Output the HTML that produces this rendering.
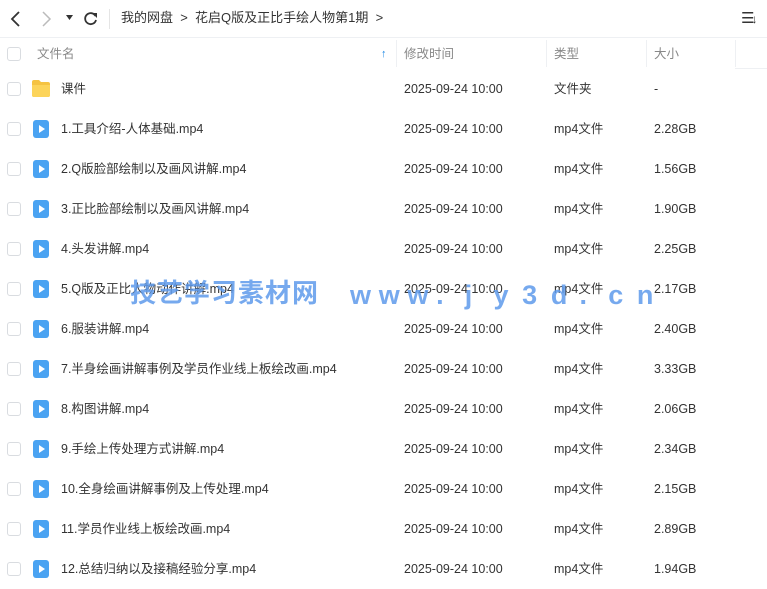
<!DOCTYPE html>
<html><head><meta charset="utf-8"><style>
*{margin:0;padding:0;box-sizing:border-box}
body{width:767px;height:587px;overflow:hidden;background:#fff;font-family:"Liberation Sans","Noto Sans CJK SC",sans-serif;font-size:12.5px;color:#333;position:relative}
.top{position:absolute;left:0;top:0;width:767px;height:38px;border-bottom:1px solid #eef0f3}
.t{position:absolute;white-space:nowrap;line-height:16px;height:16px}
.hdr{position:absolute;top:38px;left:0;width:767px;height:32px;color:#888}
.sep{position:absolute;top:40px;width:1px;height:27px;background:#eef0f3}
.cb{position:absolute;left:7px;width:14px;height:14px;border:1px solid #d9dce0;border-radius:3px;background:#fff}
.row{position:absolute;left:0;width:767px;height:40px}
.row .t{top:12px}
.vid{position:absolute;left:33px;top:11px;width:16px;height:18px;background:#4aa3f2;border-radius:3px}
.vid:after{content:"";position:absolute;left:6px;top:5px;border-left:6px solid #fff;border-top:4px solid transparent;border-bottom:4px solid transparent}
.wm{position:absolute;color:#5f9bec;opacity:.85;font-weight:bold;font-size:26px;white-space:nowrap;font-family:"Noto Sans CJK SC","WenQuanYi Zen Hei",sans-serif;line-height:32px}
.wl span{display:inline-block;width:28.7px;font-family:"Liberation Sans",sans-serif;font-size:27px}
</style></head><body>
<div class="top">
<svg style="position:absolute;left:8px;top:10px" width="16" height="18"><path d="M11 2 L4 9 L11 16" fill="none" stroke="#333" stroke-width="1.8"/></svg>
<svg style="position:absolute;left:38px;top:10px" width="16" height="18"><path d="M5 2 L12 9 L5 16" fill="none" stroke="#bbb" stroke-width="1.5"/></svg>
<svg style="position:absolute;left:66px;top:15px" width="8" height="6"><path d="M0 0 L7 0 L3.5 5Z" fill="#333"/></svg>
<svg style="position:absolute;left:83px;top:10px" width="16" height="17"><path d="M12.5 6 A5.5 5.5 0 1 0 13 10" fill="none" stroke="#333" stroke-width="1.8"/><path d="M9 3 L14 3 L14 8Z" fill="#333"/></svg>
<div style="position:absolute;left:109px;top:9px;width:1px;height:20px;background:#e5e5e5"></div>
<div class="t" style="left:121px;top:10px;font-size:13px;color:#333">我的网盘 &nbsp;&gt;&nbsp; 花启Q版及正比手绘人物第1期 &nbsp;&gt;</div>
<div class="t" style="left:741px;top:11px;font-size:15px;color:#333">☰<span style="font-size:12px;position:relative;left:-3px">↓</span></div>
</div>
<div class="hdr">
<div class="cb" style="top:9px"></div>
<div class="t" style="left:37px;top:8px">文件名</div>
<div class="t" style="left:381px;top:8px;color:#1e88e5;font-size:11px;font-weight:bold">↑</div>
<div class="t" style="left:404px;top:8px">修改时间</div>
<div class="t" style="left:554px;top:8px">类型</div>
<div class="t" style="left:654px;top:8px">大小</div>
</div>
<div class="sep" style="left:396px"></div><div class="sep" style="left:546px"></div><div class="sep" style="left:646px"></div><div class="sep" style="left:735px"></div>
<div style="position:absolute;left:735px;top:68px;width:32px;height:1px;background:#eef0f3"></div>

<div class="row" style="top:69px"><div class="cb" style="top:13px"></div>
<svg style="position:absolute;left:31px;top:10px" width="20" height="19"><path d="M1 3 Q1 1 3 1 L8 1 L10 3 L17 3 Q19 3 19 5 L19 16 Q19 18 17 18 L3 18 Q1 18 1 16Z" fill="#f5c342"/><path d="M1 6 L19 6 L19 16 Q19 18 17 18 L3 18 Q1 18 1 16Z" fill="#fcd45a"/></svg>
<div class="t" style="left:61px">课件</div><div class="t" style="left:404px">2025-09-24 10:00</div><div class="t" style="left:554px">文件夹</div><div class="t" style="left:654px">-</div></div>

<div class="row" style="top:109px"><div class="cb" style="top:13px"></div><div class="vid"></div><div class="t" style="left:61px">1.工具介绍-人体基础.mp4</div><div class="t" style="left:404px">2025-09-24 10:00</div><div class="t" style="left:554px">mp4文件</div><div class="t" style="left:654px">2.28GB</div></div>
<div class="row" style="top:149px"><div class="cb" style="top:13px"></div><div class="vid"></div><div class="t" style="left:61px">2.Q版脸部绘制以及画风讲解.mp4</div><div class="t" style="left:404px">2025-09-24 10:00</div><div class="t" style="left:554px">mp4文件</div><div class="t" style="left:654px">1.56GB</div></div>
<div class="row" style="top:189px"><div class="cb" style="top:13px"></div><div class="vid"></div><div class="t" style="left:61px">3.正比脸部绘制以及画风讲解.mp4</div><div class="t" style="left:404px">2025-09-24 10:00</div><div class="t" style="left:554px">mp4文件</div><div class="t" style="left:654px">1.90GB</div></div>
<div class="row" style="top:229px"><div class="cb" style="top:13px"></div><div class="vid"></div><div class="t" style="left:61px">4.头发讲解.mp4</div><div class="t" style="left:404px">2025-09-24 10:00</div><div class="t" style="left:554px">mp4文件</div><div class="t" style="left:654px">2.25GB</div></div>
<div class="row" style="top:269px"><div class="cb" style="top:13px"></div><div class="vid"></div><div class="t" style="left:61px">5.Q版及正比人物动作讲解.mp4</div><div class="t" style="left:404px">2025-09-24 10:00</div><div class="t" style="left:554px">mp4文件</div><div class="t" style="left:654px">2.17GB</div></div>
<div class="row" style="top:309px"><div class="cb" style="top:13px"></div><div class="vid"></div><div class="t" style="left:61px">6.服装讲解.mp4</div><div class="t" style="left:404px">2025-09-24 10:00</div><div class="t" style="left:554px">mp4文件</div><div class="t" style="left:654px">2.40GB</div></div>
<div class="row" style="top:349px"><div class="cb" style="top:13px"></div><div class="vid"></div><div class="t" style="left:61px">7.半身绘画讲解事例及学员作业线上板绘改画.mp4</div><div class="t" style="left:404px">2025-09-24 10:00</div><div class="t" style="left:554px">mp4文件</div><div class="t" style="left:654px">3.33GB</div></div>
<div class="row" style="top:389px"><div class="cb" style="top:13px"></div><div class="vid"></div><div class="t" style="left:61px">8.构图讲解.mp4</div><div class="t" style="left:404px">2025-09-24 10:00</div><div class="t" style="left:554px">mp4文件</div><div class="t" style="left:654px">2.06GB</div></div>
<div class="row" style="top:429px"><div class="cb" style="top:13px"></div><div class="vid"></div><div class="t" style="left:61px">9.手绘上传处理方式讲解.mp4</div><div class="t" style="left:404px">2025-09-24 10:00</div><div class="t" style="left:554px">mp4文件</div><div class="t" style="left:654px">2.34GB</div></div>
<div class="row" style="top:469px"><div class="cb" style="top:13px"></div><div class="vid"></div><div class="t" style="left:61px">10.全身绘画讲解事例及上传处理.mp4</div><div class="t" style="left:404px">2025-09-24 10:00</div><div class="t" style="left:554px">mp4文件</div><div class="t" style="left:654px">2.15GB</div></div>
<div class="row" style="top:509px"><div class="cb" style="top:13px"></div><div class="vid"></div><div class="t" style="left:61px">11.学员作业线上板绘改画.mp4</div><div class="t" style="left:404px">2025-09-24 10:00</div><div class="t" style="left:554px">mp4文件</div><div class="t" style="left:654px">2.89GB</div></div>
<div class="row" style="top:549px"><div class="cb" style="top:13px"></div><div class="vid"></div><div class="t" style="left:61px">12.总结归纳以及接稿经验分享.mp4</div><div class="t" style="left:404px">2025-09-24 10:00</div><div class="t" style="left:554px">mp4文件</div><div class="t" style="left:654px">1.94GB</div></div>

<div class="wm" style="left:130px;top:276px;letter-spacing:1px">技艺学习素材网</div>
<div class="wm wl" style="left:350px;top:278px"><span>w</span><span>w</span><span>w</span><span>.</span><span>j</span><span>y</span><span>3</span><span>d</span><span>.</span><span>c</span><span>n</span></div>
</body></html>
